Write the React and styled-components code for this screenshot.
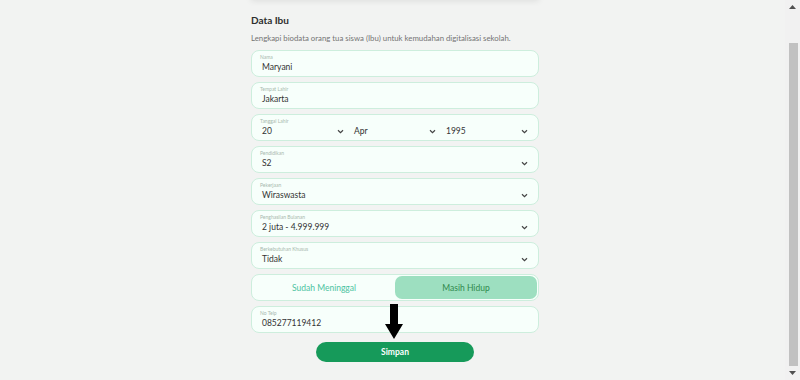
import React from 'react';
import styled, { createGlobalStyle } from 'styled-components';

const GlobalStyle = createGlobalStyle`
  html, body {
    margin: 0;
    padding: 0;
    background: #f2f3f2;
    font-family: Lato, "Noto Sans", sans-serif;
  }
`;

const Page = styled.div`
  display: flex;
  height: 380px;
  overflow: hidden;
`;

const Main = styled.main`
  flex: 1;
  display: flex;
  justify-content: center;
  padding-left: 5px;
`;

const Column = styled.div`
  width: 288px;
  display: flex;
  flex-direction: column;
`;

const PrevCard = styled.div`
  height: 10px;
  margin: -10px 0 0 0;
  background: #f2f3f2;
  box-shadow: 0 1px 6px rgba(0, 0, 0, 0.09);
`;

const Title = styled.h3`
  margin: 14px 0 0 0;
  font-size: 10px;
  font-weight: 700;
  color: #2d2d2d;
`;

const Subtitle = styled.p`
  margin: 7px 0 7px 0;
  font-size: 7.8px;
  color: #747474;
`;

const Fields = styled.div`
  display: flex;
  flex-direction: column;
  gap: 5px;
`;

const Field = styled.div`
  box-sizing: border-box;
  height: 27px;
  border: 1px solid #cdeedd;
  border-radius: 8px;
  background: #f7fffb;
  padding: 3px 10px 0 8px;
  display: flex;
  flex-direction: column;
`;

const Label = styled.span`
  font-size: 5px;
  color: #a7b9ae;
  line-height: 7px;
`;

const Row = styled.div`
  display: flex;
  align-items: center;
  gap: 10px;
  margin-top: 1px;
  padding-left: 2px;
`;

const SelectPart = styled.div`
  flex: 1;
  display: flex;
  align-items: center;
  justify-content: space-between;
  font-size: 8.5px;
  color: #333;
  line-height: 11px;
`;

const Value = styled.span`
  font-size: 8.5px;
  color: #333;
  line-height: 11px;
`;

const Chevron = () => (
  <svg width="7" height="5" viewBox="0 0 7 5">
    <polyline points="1,1.2 3.5,3.6 6,1.2" fill="none" stroke="#444" strokeWidth="1.2" />
  </svg>
);

const Toggle = styled.div`
  box-sizing: border-box;
  height: 27px;
  border: 1px solid #cdeedd;
  border-radius: 8px;
  background: #f7fffb;
  display: flex;
  padding: 1px;
`;

const ToggleOption = styled.div`
  flex: 1;
  display: flex;
  align-items: center;
  justify-content: center;
  border-radius: 7px;
  font-size: 8.5px;
  background: ${p => (p.active ? '#9ddfc0' : 'transparent')};
  color: ${p => (p.active ? '#2f8a4c' : '#4cc3a1')};
`;

const ButtonRow = styled.div`
  position: relative;
  display: flex;
  justify-content: center;
  margin-top: 9px;
`;

const SaveButton = styled.button`
  width: 158px;
  height: 20px;
  border: none;
  border-radius: 10px;
  background: #169a5a;
  color: #fff;
  font-family: inherit;
  font-size: 8.5px;
  font-weight: 700;
`;

const Arrow = styled.svg`
  position: absolute;
  left: 133px;
  top: -38px;
`;

const Scrollbar = styled.div`
  width: 15px;
  background: #f1f1f1;
  display: flex;
  flex-direction: column;
  align-items: center;
`;

const ScrollArrow = styled.div`
  height: 14px;
  display: flex;
  align-items: center;
  justify-content: center;
`;

const Thumb = styled.div`
  width: 9px;
  margin: 29px 0 0 1px;
  height: 323px;
  background: #c1c1c1;
`;

const Spacer = styled.div`
  flex: 1;
`;

const selects = [
  { label: 'Pendidikan', value: 'S2' },
  { label: 'Pekerjaan', value: 'Wiraswasta' },
  { label: 'Penghasilan Bulanan', value: '2 juta - 4.999.999' },
  { label: 'Berkebutuhan Khusus', value: 'Tidak' },
];

export default function App() {
  return (
    <Page>
      <GlobalStyle />
      <Main>
        <Column>
          <PrevCard />
          <Title>Data Ibu</Title>
          <Subtitle>Lengkapi biodata orang tua siswa (Ibu) untuk kemudahan digitalisasi sekolah.</Subtitle>
          <Fields>
            <Field>
              <Label>Nama</Label>
              <Row><Value>Maryani</Value></Row>
            </Field>
            <Field>
              <Label>Tempat Lahir</Label>
              <Row><Value>Jakarta</Value></Row>
            </Field>
            <Field>
              <Label>Tanggal Lahir</Label>
              <Row>
                <SelectPart>20 <Chevron /></SelectPart>
                <SelectPart>Apr <Chevron /></SelectPart>
                <SelectPart>1995 <Chevron /></SelectPart>
              </Row>
            </Field>
            {selects.map(s => (
              <Field key={s.label}>
                <Label>{s.label}</Label>
                <Row><SelectPart>{s.value} <Chevron /></SelectPart></Row>
              </Field>
            ))}
            <Toggle>
              <ToggleOption>Sudah Meninggal</ToggleOption>
              <ToggleOption active>Masih Hidup</ToggleOption>
            </Toggle>
            <Field>
              <Label>No Telp</Label>
              <Row><Value>085277119412</Value></Row>
            </Field>
          </Fields>
          <ButtonRow>
            <Arrow width="20" height="36" viewBox="0 0 20 36">
              <polygon points="6,0 14,0 14,20 19,20 10,35 1,20 6,20" fill="#000" />
            </Arrow>
            <SaveButton>Simpan</SaveButton>
          </ButtonRow>
        </Column>
      </Main>
      <Scrollbar>
        <ScrollArrow>
          <svg width="7" height="4" viewBox="0 0 7 4"><polygon points="0,4 7,4 3.5,0" fill="#505050" /></svg>
        </ScrollArrow>
        <Thumb />
        <Spacer />
        <ScrollArrow>
          <svg width="7" height="4" viewBox="0 0 7 4"><polygon points="0,0 7,0 3.5,4" fill="#505050" /></svg>
        </ScrollArrow>
      </Scrollbar>
    </Page>
  );
}
